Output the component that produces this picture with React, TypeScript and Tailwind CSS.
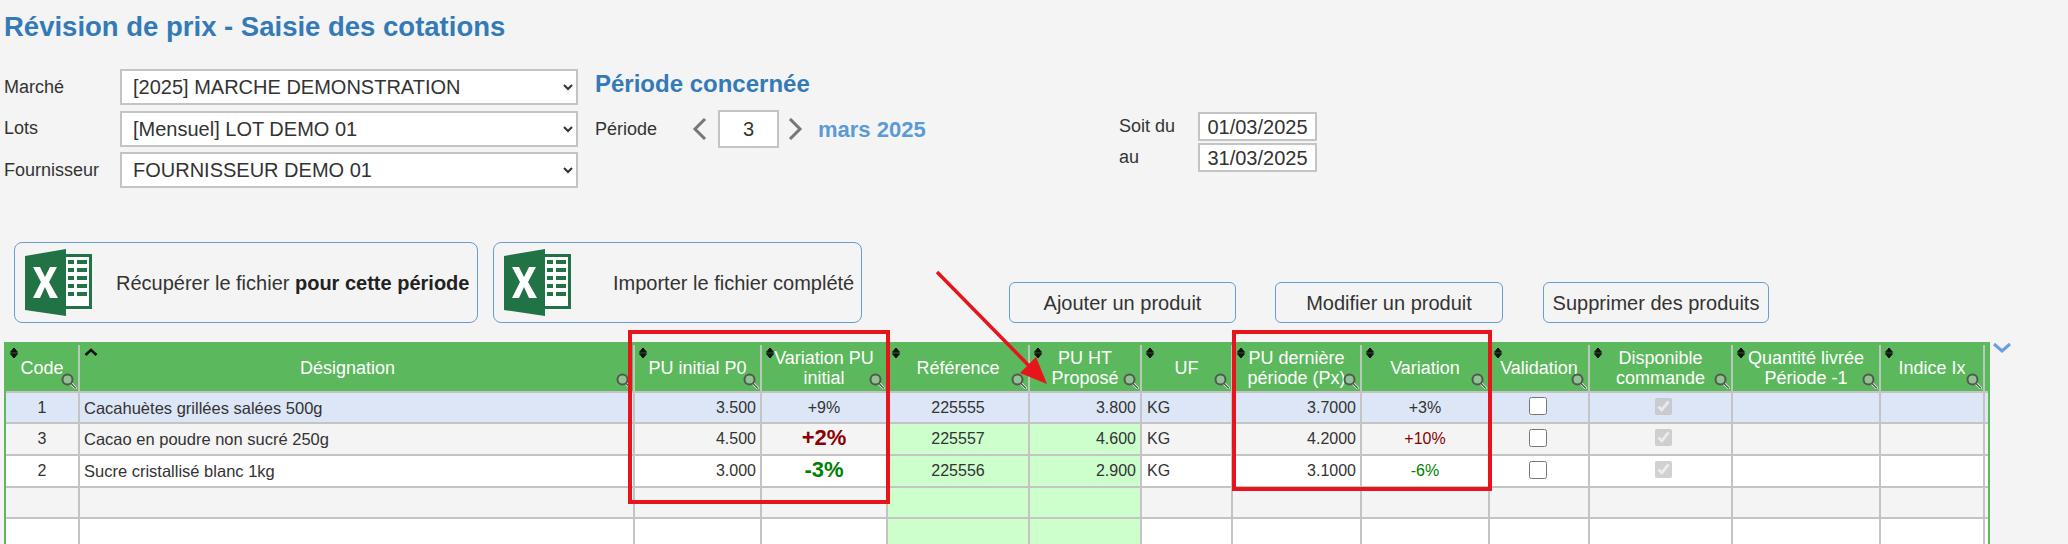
import type { ReactNode } from "react";

const font = "font-['Liberation_Sans',Arial,sans-serif]";

interface Column {
  label: ReactNode;
  width: number;
  sort?: "up";
  pad?: string;
}

const columns: Column[] = [
  { label: "Code", width: 74 },
  { label: "Désignation", width: 555, sort: "up", pad: "pr-[18px]" },
  { label: "PU initial P0", width: 127 },
  { label: <>Variation PU<br />initial</>, width: 126 },
  { label: "Référence", width: 142 },
  { label: <>PU HT<br />Proposé</>, width: 112 },
  { label: "UF", width: 91 },
  { label: <>PU dernière<br />période (Px)</>, width: 129 },
  { label: "Variation", width: 128 },
  { label: "Validation", width: 100 },
  { label: <>Disponible<br />commande</>, width: 143 },
  { label: <>Quantité livrée<br />Période -1</>, width: 148 },
  { label: "Indice Ix", width: 104 },
];

const rows = [
  {
    code: "1", name: "Cacahuètes grillées salées 500g", p0: "3.500", ref: "225555", pu: "3.800", last: "3.7000",
    rowClass: "h-[31px] bg-[#dde6f6]",
    varInit: <span className="text-[#333]">+9%</span>,
    variation: <span className="text-[#333]">+3%</span>,
  },
  {
    code: "3", name: "Cacao en poudre non sucré 250g", p0: "4.500", ref: "225557", pu: "4.600", last: "4.2000",
    rowClass: "h-[32px] bg-[#f4f4f4]",
    varInit: <span className="text-[22px] font-bold text-[#8b0000]">+2%</span>,
    variation: <span className="text-[#8b0000]">+10%</span>,
  },
  {
    code: "2", name: "Sucre cristallisé blanc 1kg", p0: "3.000", ref: "225556", pu: "2.900", last: "3.1000",
    rowClass: "h-[32px] bg-white",
    varInit: <span className="text-[22px] font-bold text-[#008000]">-3%</span>,
    variation: <span className="text-[#008000]">-6%</span>,
  },
];

function ExcelIcon() {
  return (
    <svg width="67" height="67" viewBox="0 0 67 67" className="shrink-0">
      <rect x="38" y="5" width="29" height="55" fill="#217346" />
      <rect x="41" y="8" width="23" height="49" fill="#fff" />
      {[11, 19, 27, 35, 43].map((y) => (
        <g key={y} fill="#217346">
          <rect x="43" y={y} width="6" height="4" />
          <rect x="52" y={y} width="10" height="4" />
        </g>
      ))}
      <polygon points="0,7 41,0 41,67 0,61" fill="#217346" />
      <polygon points="8,18 15,18 20,28 25,18 32,18 24,33 33,49 25,49 20,38 15,49 8,49 16,33" fill="#fff" />
    </svg>
  );
}

function SortIcon({ up }: { up?: boolean }) {
  if (up) {
    return (
      <svg width="14" height="10" viewBox="0 0 14 10" className="absolute left-[4px] top-[3px]">
        <path d="M1.5 7 L7 2 L12.5 7" fill="none" stroke="#111" strokeWidth="2.6" />
      </svg>
    );
  }
  return (
    <svg width="10" height="12" viewBox="0 0 10 12" className="absolute left-[3px] top-[2px]">
      <path d="M5 1 L8.5 5.2 H1.5 Z M5 11 L8.5 6.8 H1.5 Z" fill="#111" stroke="#111" strokeWidth="1" strokeLinejoin="round" />
    </svg>
  );
}

function SearchIcon() {
  return (
    <svg width="16" height="16" viewBox="0 0 16 16" className="absolute bottom-[2px] right-[1px]">
      <path d="M9.5 10 L14.5 15" stroke="#fff" strokeWidth="2.6" strokeLinecap="round" />
      <path d="M9.5 10 L14.5 15" stroke="#555" strokeWidth="1.5" strokeLinecap="round" />
      <circle cx="6.5" cy="6.5" r="5" fill="#8ec48e" stroke="#555" strokeWidth="2" />
    </svg>
  );
}

function FormSelect({ value }: { value: string }) {
  return (
    <select
      defaultValue={value}
      className="h-[36px] w-[458px] border-2 border-[#c4c4c4] bg-white pl-[7px] text-[20px] text-[#333]"
    >
      <option>{value}</option>
    </select>
  );
}

function SmallButton({ children, className }: { children: ReactNode; className: string }) {
  return (
    <button className={`h-[41px] rounded-[6px] border border-[#6a9bd1] text-center text-[20px] text-[#333] ${className}`}>
      {children}
    </button>
  );
}

function Chevron({ points }: { points: string }) {
  return (
    <svg width="15" height="22" viewBox="0 0 15 22" className="shrink-0">
      <polyline points={points} fill="none" stroke="#777" strokeWidth="3" />
    </svg>
  );
}

export default function App() {
  return (
    <div className={`relative h-[544px] w-[2068px] overflow-hidden bg-[#f4f4f4] text-[#333] ${font}`}>
      <h1 className="h-[69px] pl-[4px] pt-[12px] text-[27.5px] font-bold leading-[30px] text-[#337ab7]">
        Révision de prix - Saisie des cotations
      </h1>

      <div className="flex h-[173px] items-start">
        <div className="flex w-[595px] flex-col gap-[5.5px] pl-[4px]">
          {[
            ["Marché", "[2025] MARCHE DEMONSTRATION"],
            ["Lots", "[Mensuel] LOT DEMO 01"],
            ["Fournisseur", "FOURNISSEUR DEMO 01"],
          ].map(([label, value]) => (
            <div key={label} className="flex items-center">
              <span className="w-[116px] text-[18px]">{label}</span>
              <FormSelect value={value} />
            </div>
          ))}
        </div>

        <div className="w-[523px]">
          <div className="h-[41px] pt-[1px] text-[24px] font-bold leading-[28px] text-[#337ab7]">Période concernée</div>
          <div className="flex items-center">
            <span className="w-[97px] text-[18px]">Période</span>
            <Chevron points="13,1 3,11 13,21" />
            <input
              readOnly
              value="3"
              className="ml-[11px] h-[38px] w-[61px] border-2 border-[#c4c4c4] bg-white text-center text-[20px] text-[#333]"
            />
            <span className="ml-[9px]"><Chevron points="2,1 12,11 2,21" /></span>
            <span className="ml-[15px] text-[22px] font-bold text-[#5b9bd5]">mars 2025</span>
          </div>
        </div>

        <div className="mt-[43px] grid grid-cols-[80px_119px] items-center gap-y-[2px] text-[18px]">
          <span className="pl-[1px]">Soit du</span>
          <input readOnly value="01/03/2025" className="h-[29px] border-2 border-[#c4c4c4] bg-white text-center text-[20px] text-[#333]" />
          <span className="pl-[1px]">au</span>
          <input readOnly value="31/03/2025" className="h-[29px] border-2 border-[#c4c4c4] bg-white text-center text-[20px] text-[#333]" />
        </div>
      </div>

      <div className="flex h-[81px] items-end pl-[14px]">
        <button className="flex h-[81px] w-[464px] items-center gap-[24px] rounded-[8px] border border-[#6a9bd1] pl-[10px] text-[20px] text-[#333]">
          <ExcelIcon />
          <span>Récupérer le fichier <b className="text-[#222]">pour cette période</b></span>
        </button>
        <button className="ml-[15px] flex h-[81px] w-[369px] items-center rounded-[8px] border border-[#6a9bd1] pl-[10px] text-[20px] text-[#333]">
          <ExcelIcon />
          <span className="ml-[42px]">Importer le fichier complété</span>
        </button>
        <SmallButton className="ml-[147px] w-[227px]">Ajouter un produit</SmallButton>
        <SmallButton className="ml-[39px] w-[228px]">Modifier un produit</SmallButton>
        <SmallButton className="ml-[40px] w-[226px]">Supprimer des produits</SmallButton>
      </div>

      <div className="relative ml-[4px] mt-[19px] w-[1986px] border-x-2 border-t-[3px] border-[#5cb85c]">
        <table className="w-[1982px] table-fixed border-separate border-spacing-0 text-[16px]">
          <colgroup>
            {columns.map((c, i) => (
              <col key={i} style={{ width: c.width }} />
            ))}
            <col />
          </colgroup>
          <thead>
            <tr className="h-[48px] bg-[#5cb85c] text-[18px] font-normal text-white">
              {columns.map((c, i) => (
                <th key={i} className={`relative border-r-2 border-b-2 border-r-[#b9c9b9] border-b-[#c4c4c4] p-0 font-normal leading-[20px] ${c.pad ?? ""}`}>
                  <SortIcon up={c.sort === "up"} />
                  {c.label}
                  <SearchIcon />
                </th>
              ))}
              <th className="border-b-2 border-b-[#c4c4c4] p-0" />
            </tr>
          </thead>
          <tbody>
            {rows.map((r, i) => {
              const cell = i === 0 ? "" : "bg-[#ccffcc]";
              return (
                <tr key={r.code} className={r.rowClass}>
                  <Td className="text-center">{r.code}</Td>
                  <Td className="pl-[4px] text-[16.5px]">{r.name}</Td>
                  <Td className="pr-[4px] text-right">{r.p0}</Td>
                  <Td className="text-center">{r.varInit}</Td>
                  <Td className={`text-center ${cell}`}>{r.ref}</Td>
                  <Td className={`pr-[4px] text-right ${cell}`}>{r.pu}</Td>
                  <Td className="pl-[5px]">KG</Td>
                  <Td className="pr-[4px] text-right">{r.last}</Td>
                  <Td className="text-center">{r.variation}</Td>
                  <Td className="pr-[2px] text-center">
                    <input type="checkbox" className="mb-[3px] size-[18px] align-middle" />
                  </Td>
                  <Td className="pl-[5px] text-center">
                    <input type="checkbox" checked disabled readOnly className="mb-[3px] size-[17px] align-middle" />
                  </Td>
                  <Td />
                  <Td />
                  <td className="border-b-2 border-b-[#c4c4c4] p-0" />
                </tr>
              );
            })}
            {["h-[31px] bg-[#f4f4f4]", "h-[32px] bg-white"].map((rowClass) => (
              <tr key={rowClass} className={rowClass}>
                {columns.map((c, i) => (
                  <Td key={i} className={i === 4 || i === 5 ? "bg-[#ccffcc]" : ""} />
                ))}
                <td className="border-b-2 border-b-[#c4c4c4] p-0" />
              </tr>
            ))}
          </tbody>
        </table>
      </div>

      {/* annotations drawn over the screenshot */}
      <div className="absolute left-[628px] top-[330px] h-[174px] w-[262px] border-[4px] border-[#e8141c]" />
      <div className="absolute left-[1232px] top-[330px] h-[161px] w-[260px] border-[4px] border-[#e8141c]" />
      <svg width="130" height="130" viewBox="0 0 130 130" className="absolute left-[930px] top-[265px]">
        <line x1="7" y1="7" x2="108" y2="110" stroke="#e8141c" strokeWidth="3.5" />
        <polygon points="117,119 90,108 106,92" fill="#e8141c" />
      </svg>
      <svg width="20" height="12" viewBox="0 0 20 12" className="absolute left-[1992px] top-[342px]">
        <polyline points="2,2 10,9 18,2" fill="none" stroke="#6a9fe0" strokeWidth="3" />
      </svg>
    </div>
  );
}

function Td({ children, className = "" }: { children?: ReactNode; className?: string }) {
  return (
    <td className={`border-r-2 border-b-2 border-r-[#c4c4c4] border-b-[#c4c4c4] p-0 leading-[20px] ${className}`}>
      {children}
    </td>
  );
}
